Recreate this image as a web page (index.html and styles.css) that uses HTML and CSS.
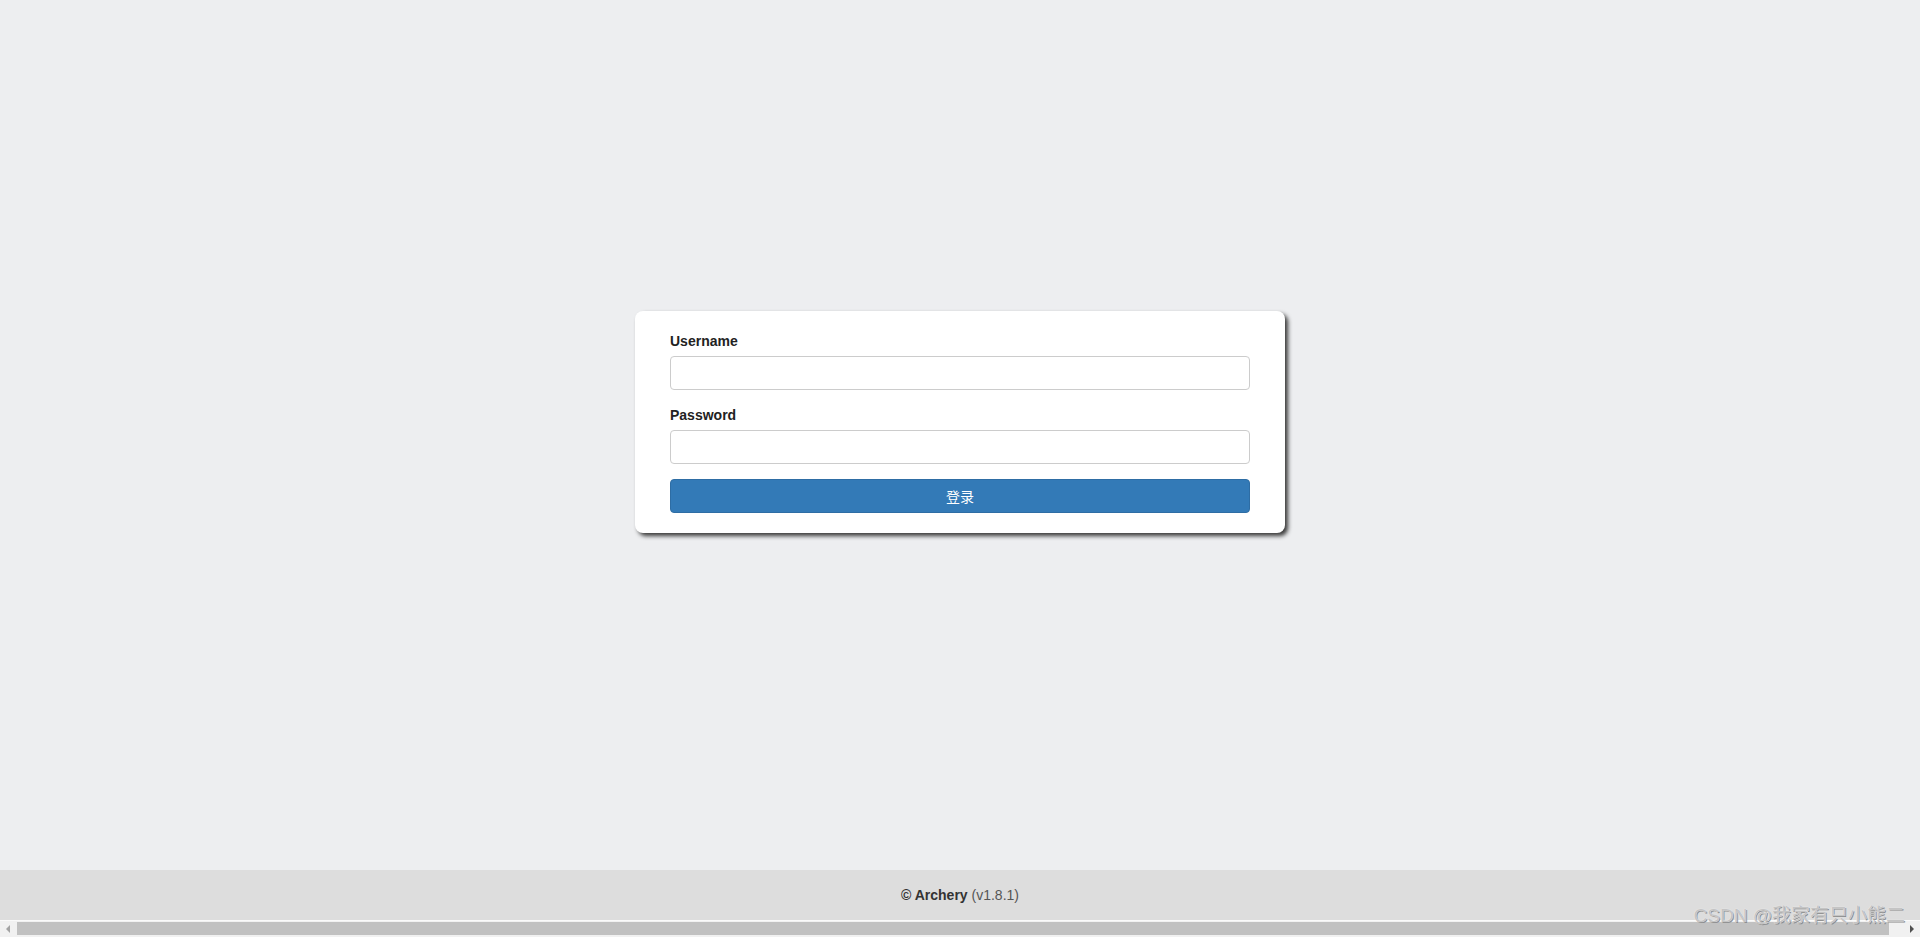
FILE: index.html
```html
<!DOCTYPE html>
<html>
	<head>
		<meta charset="UTF-8">
		<title>Archery</title>
		<link rel="stylesheet" href="styles.css">
	</head>
	<body>
		<div class="page">
			<div class="main">
				<form class="login-box">
					<div class="form-group">
						<label for="username">Username</label>
						<input type="text" id="username" class="form-control">
					</div>
					<div class="form-group">
						<label for="password">Password</label>
						<input type="password" id="password" class="form-control">
					</div>
					<button type="button" class="btn-login">登录</button>
				</form>
			</div>
			<div class="footer">
				<strong>&copy; Archery</strong> <span class="ver">(v1.8.1)</span>
			</div>
			<div class="hscroll">
				<div class="arrow left"></div>
				<div class="thumb"></div>
				<div class="arrow right"></div>
			</div>
		</div>
		<div class="mark">CSDN @我家有只小熊二</div>
	</body>
</html>
```

FILE: styles.css
```css
*{
	margin:0;padding:0;
	box-sizing:border-box;
}
html,body{
	height:100%;
	overflow:hidden;
}
body{
	background:#edeef0;
	font-family:"Liberation Sans",Arial,"Noto Sans CJK SC",sans-serif;
	font-size:14px;
	line-height:20px;
	color:#333;
}
.page{
	height:937px;
	display:flex;
	flex-direction:column;
}
.main{
	flex:1;
	padding-top:311px;
}
.login-box{
	width:650px;
	margin:0 auto;
	padding:20px 35px 20px;
	background:#fff;
	border-radius:8px;
	box-shadow:3px 3px 4px #3a3a3a;
}
.form-group{
	margin-bottom:15px;
}
.form-group label{
	display:block;
	font-weight:bold;
	margin-bottom:5px;
	color:#222;
}
.form-control{
	display:block;
	width:100%;
	height:34px;
	padding:6px 12px;
	font-size:14px;
	border:1px solid #ccc;
	border-radius:4px;
	background:#fff;
	outline:none;
}
.btn-login{
	display:block;
	width:100%;
	height:34px;
	font-family:"Liberation Sans","Noto Sans CJK SC",sans-serif;
	font-size:14px;
	color:#fff;
	background:#337ab7;
	border:1px solid #2e6da4;
	border-radius:4px;
	cursor:pointer;
}
.footer{
	height:50px;
	line-height:50px;
	background:#ddd;
	text-align:center;
	color:#333;
}
.footer .ver{
	color:#555;
}
.hscroll{
	height:17px;
	background:#f1f1f1;
	border-top:1px solid #fafafa;
	display:flex;
	align-items:center;
	padding:0 0 1px;
}
.hscroll .thumb{
	flex:1;
	height:13px;
	background:#c1c1c1;
	margin:0 15px 0 1px;
}
.hscroll .arrow{
	width:16px;
	height:16px;
	position:relative;
}
.hscroll .arrow:after{
	content:"";
	position:absolute;
	top:4px;
	border-top:4px solid transparent;
	border-bottom:4px solid transparent;
}
.hscroll .left:after{
	left:6px;
	border-right:4px solid #a3a3a3;
}
.hscroll .right:after{
	left:6px;
	border-left:4px solid #505050;
}
.mark{
	position:absolute;
	right:15px;
	bottom:9px;
	font-size:19px;
	line-height:24px;
	color:#c4c4c4;
	font-family:"Liberation Sans","Noto Sans CJK SC",sans-serif;
	text-shadow:0 0 1px #fff,1px 1px 0 #888;
}
```
